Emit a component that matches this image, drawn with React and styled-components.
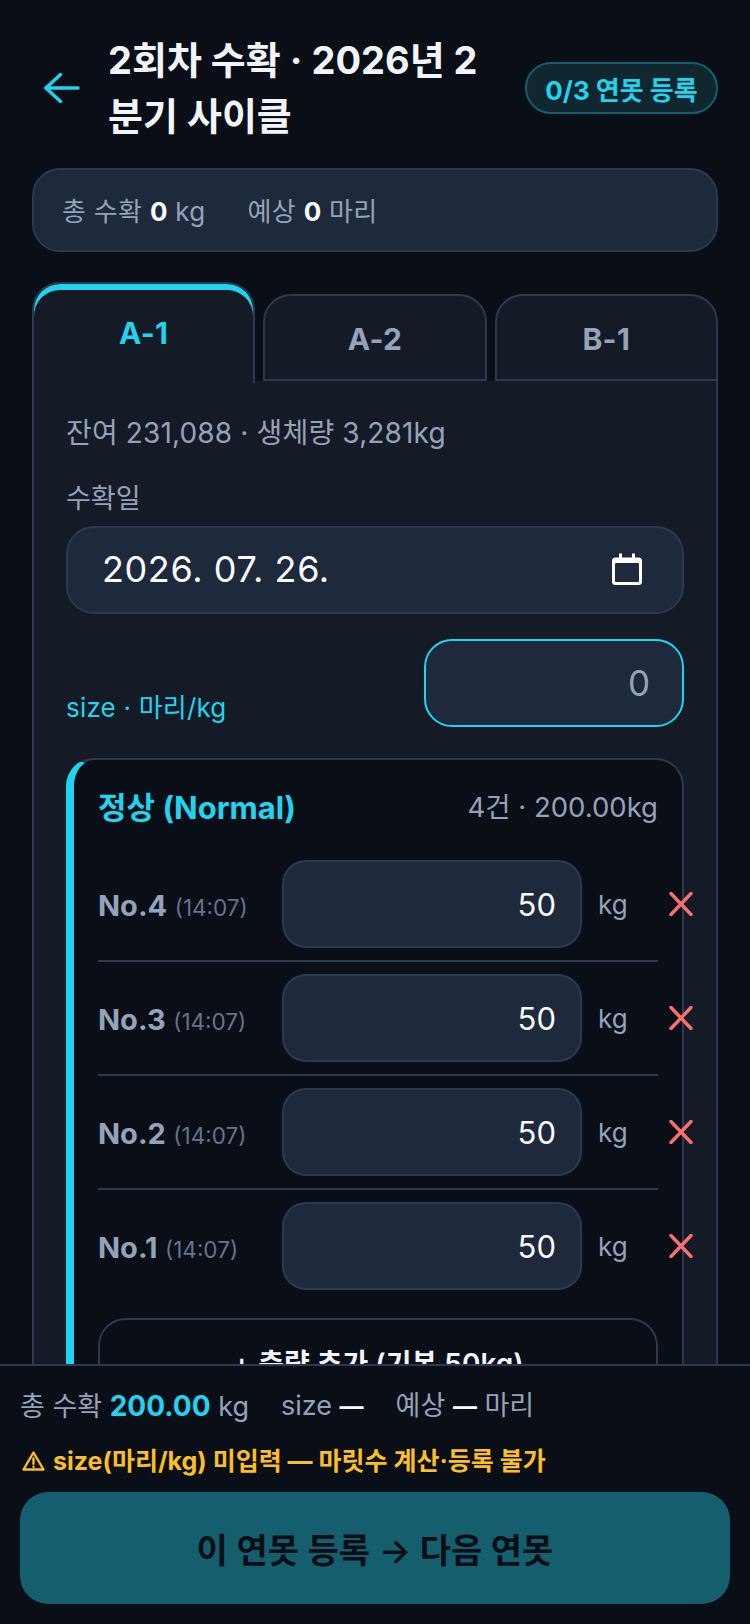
import styled, { createGlobalStyle } from "styled-components"

const GlobalStyle = createGlobalStyle`
    html, body {
        margin: 0;
        padding: 0;
        background: #0a0e17;
        overflow: hidden;
    }
    * {
        box-sizing: border-box;
    }
`;

const weighings = [
    { no: 4, time: "14:07" },
    { no: 3, time: "14:07" },
    { no: 2, time: "14:07" },
    { no: 1, time: "14:07" },
];

const ponds = ["A-1", "A-2", "B-1"];

export default function App() {
    return (
        <Page>
            <GlobalStyle />
            <Header>
                <BackButton aria-label="back">
                    <svg width="36" height="30" viewBox="0 0 36 30" fill="none" stroke="#22d3ee" strokeWidth="3.4" strokeLinecap="round" strokeLinejoin="round">
                        <path d="M34 15H2" />
                        <path d="M16.5 1.5L2 15l14.5 13.5" />
                    </svg>
                </BackButton>
                <Title>2회차 수확 · 2026년 2분기 사이클</Title>
                <Badge>0/3 연못 등록</Badge>
            </Header>

            <Summary>
                <span>총 수확 <b>0</b> kg</span>
                <span>예상 <b>0</b> 마리</span>
            </Summary>

            <Tabs>
                {ponds.map((name, i) => (
                    <Tab key={name} $active={i === 0}>{name}</Tab>
                ))}
            </Tabs>

            <Panel>
                <Remain>잔여 231,088 · 생체량 3,281kg</Remain>
                <FieldLabel>수확일</FieldLabel>
                <DateBox>
                    <span>2026. 07. 26.</span>
                    <svg width="30" height="32" viewBox="0 0 30 32" fill="none">
                        <path d="M7 0.5h3v4h10v-4h3v4h3.5A3.5 3.5 0 0 1 30 8v20.5a3.5 3.5 0 0 1-3.5 3.5h-23A3.5 3.5 0 0 1 0 28.5V8a3.5 3.5 0 0 1 3.5-3.5H7z" fill="#fff" />
                        <rect x="3" y="10" width="24" height="19" rx="1" fill="#1e293b" />
                    </svg>
                </DateBox>

                <SizeRow>
                    <SizeLabel>size · 마리/kg</SizeLabel>
                    <SizeInput>0</SizeInput>
                </SizeRow>

                <Group>
                    <GroupHead>
                        <GroupName>정상 (Normal)</GroupName>
                        <GroupMeta>4건 · 200.00kg</GroupMeta>
                    </GroupHead>
                    {weighings.map((w, i) => (
                        <Row key={w.no} $last={i === weighings.length - 1}>
                            <RowName>
                                <b>No.{w.no}</b> <small>({w.time})</small>
                            </RowName>
                            <WeightBox>50</WeightBox>
                            <Unit>kg</Unit>
                            <DeleteButton aria-label="delete">
                                <svg width="24" height="24" viewBox="0 0 24 24" stroke="#f87171" strokeWidth="3.4" strokeLinecap="round">
                                    <path d="M2 1.5l20 21M22 1.5l-20 21" />
                                </svg>
                            </DeleteButton>
                        </Row>
                    ))}
                    <AddButton>+ 측량 추가 (기본 50kg)</AddButton>
                </Group>
            </Panel>

            <Footer>
                <Totals>
                    <span>총 수확 <Strong>200.00</Strong> kg</span>
                    <span>size <b>—</b></span>
                    <span>예상 <b>—</b> 마리</span>
                </Totals>
                <Warning>
                    <svg width="23" height="20" viewBox="0 0 23 20" fill="none" stroke="#fbbf24" strokeWidth="2.4" strokeLinejoin="round" strokeLinecap="round">
                        <path d="M11.5 1.5L1.5 18.5h20z" />
                        <path d="M11.5 7.5v5.2M11.5 15.6v.2" />
                    </svg>
                    size(마리/kg) 미입력 — 마릿수 계산·등록 불가
                </Warning>
                <Submit>이 연못 등록 → 다음 연못</Submit>
            </Footer>
        </Page>
    )
}

const Page = styled.div`
    width: 750px;
    height: 100vh;
    overflow: hidden;
    padding: 32px 32px 0;
    background: #0a0e17;
    color: #f1f5f9;
    font-family: Inter, "Noto Sans CJK KR", sans-serif;
`;

const Header = styled.header`
    display: flex;
    align-items: center;
    height: 112px;
`;

const BackButton = styled.button`
    display: flex;
    align-items: center;
    flex: none;
    width: 76px;
    padding: 0 0 0 12px;
    background: none;
    border: none;
`;

const Title = styled.h1`
    width: 395px;
    margin: 0;
    font-size: 38px;
    line-height: 56px;
    font-weight: 700;
    color: #f1f5f9;
`;

const Badge = styled.div`
    flex: none;
    margin-left: auto;
    width: 193px;
    height: 52px;
    display: flex;
    align-items: center;
    justify-content: center;
    font-size: 26px;
    font-weight: 700;
    color: #22d3ee;
    background: #10272f;
    border: 2px solid #155e6d;
    border-radius: 26px;
    white-space: nowrap;
`;

const Summary = styled.div`
    display: flex;
    align-items: center;
    gap: 42px;
    height: 84px;
    margin-top: 24px;
    padding: 0 28px 2px;
    font-size: 26px;
    letter-spacing: 0.3px;
    color: #94a3b8;
    background: #1e293b;
    border: 2px solid #2a3a50;
    border-radius: 28px;

    b {
        color: #f8fafc;
        font-weight: 700;
    }
`;

const Tabs = styled.div`
    display: grid;
    grid-template-columns: repeat(3, 1fr);
    gap: 8px;
    align-items: end;
    margin-top: 30px;
`;

const Tab = styled.div`
    display: flex;
    justify-content: center;
    padding-top: ${props => (props.$active ? "31px" : "25px")};
    height: ${props => (props.$active ? "101px" : "87px")};
    font-size: 30px;
    line-height: 36px;
    letter-spacing: 0.3px;
    font-weight: 700;
    color: ${props => (props.$active ? "#22d3ee" : "#94a3b8")};
    background: #141b27;
    border: 2px solid #2a3a50;
    border-bottom: ${props => (props.$active ? "none" : "2px solid #2a3a50")};
    box-shadow: ${props => (props.$active ? "inset 0 6px 0 #22d3ee" : "none")};
    border-radius: 28px 28px 0 0;
    margin-bottom: ${props => (props.$active ? "-2px" : "0")};
    position: relative;
`;

const Panel = styled.section`
    padding: 34px 32px 0;
    height: 1400px;
    background: #141b27;
    border: 2px solid #2a3a50;
    border-top: none;
`;

const Remain = styled.div`
    font-size: 28px;
    line-height: 36px;
    letter-spacing: 0.15px;
    color: #94a3b8;
`;

const FieldLabel = styled.div`
    margin-top: 30px;
    font-size: 27px;
    line-height: 36px;
    color: #94a3b8;
`;

const DateBox = styled.div`
    display: flex;
    align-items: center;
    justify-content: space-between;
    height: 88px;
    margin-top: 9px;
    padding: 0 40px 2px 34px;
    font-size: 36px;
    letter-spacing: 0.6px;
    color: #f8fafc;
    background: #1e293b;
    border: 2px solid #2a3a50;
    border-radius: 28px;
`;

const SizeRow = styled.div`
    display: flex;
    align-items: flex-end;
    justify-content: space-between;
    margin-top: 25px;
`;

const SizeLabel = styled.div`
    font-size: 26px;
    line-height: 36px;
    letter-spacing: 0.2px;
    padding-bottom: 1px;
    color: #22d3ee;
`;

const SizeInput = styled.div`
    width: 260px;
    height: 88px;
    display: flex;
    align-items: center;
    justify-content: flex-end;
    padding-right: 32px;
    font-size: 35px;
    color: #94a3b8;
    background: #1e293b;
    border: 2px solid #22d3ee;
    border-radius: 28px;
`;

const Group = styled.div`
    height: 900px;
    margin-top: 31px;
    padding: 23px 24px 0;
    background: #0a0e17;
    border: 2px solid #2a3a50;
    border-left: 8px solid #22d3ee;
    border-radius: 28px;
`;

const GroupHead = styled.div`
    display: flex;
    align-items: center;
    justify-content: space-between;
    height: 44px;
    margin-bottom: 21px;
`;

const GroupName = styled.div`
    font-size: 31px;
    font-weight: 700;
    color: #22d3ee;
`;

const GroupMeta = styled.div`
    font-size: 27.5px;
    color: #94a3b8;
`;

const Row = styled.div`
    display: flex;
    align-items: center;
    width: 560px;
    padding: 12px 0;
    height: ${props => (props.$last ? "112px" : "114px")};
    border-bottom: ${props => (props.$last ? "none" : "2px solid #2a3a50")};
`;

const RowName = styled.div`
    width: 184px;
    flex: none;
    padding-top: 3px;
    color: #94a3b8;
    white-space: nowrap;

    b {
        font-size: 29px;
        font-weight: 700;
    }
    small {
        margin-left: 3px;
        font-size: 22.5px;
        color: #64748b;
    }
`;

const WeightBox = styled.div`
    flex: none;
    width: 300px;
    height: 88px;
    display: flex;
    align-items: center;
    justify-content: flex-end;
    padding-right: 24px;
    font-size: 31px;
    color: #f8fafc;
    background: #1e293b;
    border: 2px solid #2a3a50;
    border-radius: 24px;
`;

const Unit = styled.div`
    flex: none;
    margin-left: 16px;
    font-size: 26px;
    color: #94a3b8;
`;

const DeleteButton = styled.button`
    flex: none;
    display: flex;
    margin-left: 41px;
    padding: 0;
    background: none;
    border: none;
`;

const AddButton = styled.button`
    display: block;
    width: 100%;
    height: 88px;
    margin-top: 16px;
    font-family: inherit;
    font-size: 28px;
    font-weight: 600;
    color: #f1f5f9;
    background: transparent;
    border: 2px solid #2a3a50;
    border-radius: 28px;
`;

const Footer = styled.footer`
    position: fixed;
    left: 0;
    right: 0;
    bottom: 0;
    height: 260px;
    padding: 20px 20px 20px;
    background: #0a0e17;
    border-top: 2px solid #2a3a50;
`;

const Totals = styled.div`
    display: flex;
    gap: 32px;
    font-size: 27px;
    line-height: 40px;
    color: #94a3b8;

    b {
        color: #f8fafc;
        font-size: 24px;
        font-weight: 700;
    }
`;

const Strong = styled.strong`
    font-size: 28px;
    color: #22d3ee;
    font-weight: 700;
`;

const Warning = styled.div`
    display: flex;
    align-items: center;
    gap: 8px;
    margin-top: 16px;
    padding-left: 2px;
    font-size: 25px;
    line-height: 36px;
    font-weight: 700;
    color: #fbbf24;
`;

const Submit = styled.button`
    display: block;
    width: 710px;
    height: 112px;
    margin-top: 13px;
    font-family: inherit;
    font-size: 34px;
    font-weight: 600;
    color: #0a0e17;
    background: #155e6d;
    border: none;
    border-radius: 28px;
`;
